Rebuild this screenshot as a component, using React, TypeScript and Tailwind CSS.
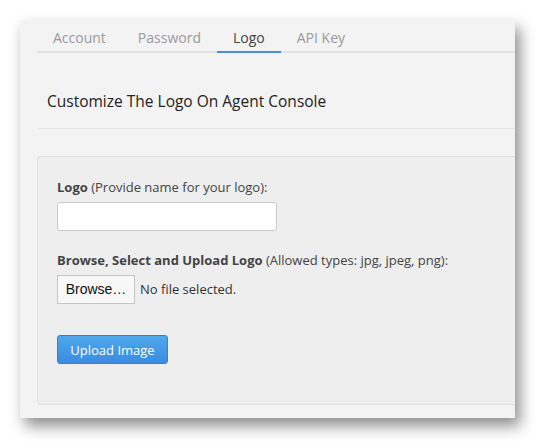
import React from "react";

const tabs = ["Account", "Password", "Logo", "API Key"];

const App = () => {
    return (
        <div className="w-[545px] h-[448px] bg-white pt-[20px] pl-[20px] font-['Open_Sans',sans-serif]">
            <div className="w-[495px] h-[398px] bg-[#f3f3f3] overflow-hidden shadow-[5px_8px_14px_rgba(0,0,0,0.45)]">
                {/* tabs */}
                <div className="ml-[17px] flex border-b-2 border-[#e2e2e2] h-[33px]">
                    {tabs.map((t) => (
                        <div
                            key={t}
                            className={
                                t === "Logo"
                                    ? "px-[16px] pt-[8px] text-[14px] leading-[20px] text-[#444] border-b-2 border-[#4a90d9] -mb-[2px]"
                                    : "px-[16px] pt-[8px] text-[14px] leading-[20px] text-[#9a9a9a]"
                            }
                        >
                            {t}
                        </div>
                    ))}
                </div>

                {/* heading */}
                <div className="ml-[17px] pl-[10px] pt-[37px] pb-[16px] border-b border-[#e6e6e6]">
                    <h2 className="text-[15.5px] leading-[22px] text-[#222]">Customize The Logo On Agent Console</h2>
                </div>

                {/* form box */}
                <div className="ml-[17px] mt-[27px] w-[500px] h-[249px] bg-[#eeeeee] border border-[#e0e0e0] rounded-[3px] pl-[19px] pt-[21px]">
                    <label className="block text-[13px] leading-[18px] text-[#444]">
                        <span className="font-bold">Logo</span> (Provide name for your logo):
                    </label>
                    <input
                        type="text"
                        className="block mt-[6px] w-[220px] h-[29px] bg-white border border-[#c9c9c9] rounded-[3px] px-2 text-[13px] outline-none"
                    />
                    <label className="block mt-[20px] text-[13px] leading-[18px] text-[#444]">
                        <span className="font-bold">Browse, Select and Upload Logo</span> (Allowed types: jpg, jpeg, png):
                    </label>
                    <div className="mt-[6px] flex items-center gap-[5px]">
                        <div className="w-[78px] h-[29px] flex items-center justify-center bg-[#f7f7f7] border border-[#c6c6c6] text-[14px] text-[#111] font-['Liberation_Sans',sans-serif]">
                            Browse…
                        </div>
                        <span className="text-[13px] text-[#333]">No file selected.</span>
                    </div>
                    <button className="mt-[31px] w-[111px] h-[29px] rounded-[3px] border border-[#3b7fc6] bg-gradient-to-b from-[#4fa8ec] to-[#3a8ce0] text-white text-[13px] leading-[18px]">
                        Upload Image
                    </button>
                </div>
            </div>
        </div>
    );
};

export default App;
